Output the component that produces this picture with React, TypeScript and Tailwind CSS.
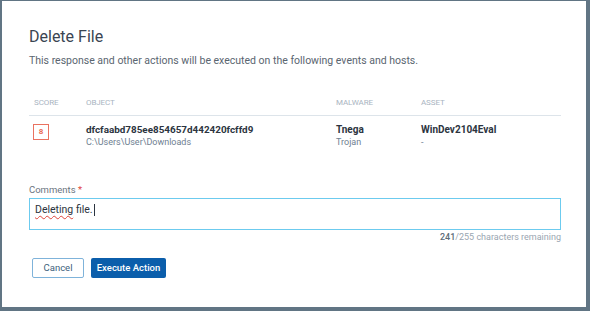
import React from "react";

export default function App() {
  return (
    <div
      className="w-[590px] h-[311px] bg-[#617584] pl-[2px] pt-[1px] pr-[4px] pb-[4px]"
      style={{ fontFamily: "Roboto, 'Noto Sans', sans-serif" }}
    >
      <div className="h-full w-full bg-white flex flex-col pl-[27px] pr-[25px]">
        <h1 className="mt-[26px] text-[16px] leading-[20px] text-[#3a4552] font-normal">
          Delete File
        </h1>
        <p className="mt-[7px] text-[10.5px] leading-[14px] text-[#5a6570]">
          This response and other actions will be executed on the following events and hosts.
        </p>

        <div className="mt-[30px] grid grid-cols-[57px_249px_85px_1fr] text-[8px] leading-[10px] text-[#a9b4bf] uppercase tracking-[-0.1px] border-b border-[#dde4ea] pb-[7px]">
          <div className="pl-[5px]">Score</div>
          <div>Object</div>
          <div className="pl-[1px]">Malware</div>
          <div className="pl-[1px]">Asset</div>
        </div>

        <div className="mt-[7px] grid grid-cols-[57px_249px_85px_1fr]">
          <div className="pl-[4px] pt-[1px]">
            <div className="w-[16px] h-[16px] border border-[#ea7260] flex items-center justify-center text-[8px] font-bold text-[#ea6a55]">
              8
            </div>
          </div>
          <div>
            <div className="text-[9.9px] leading-[13px] font-bold text-[#2c3440]">
              dfcfaabd785ee854657d442420fcffd9
            </div>
            <div className="text-[9px] leading-[12px] text-[#6e8091]">
              C:\Users\User\Downloads
            </div>
          </div>
          <div className="pl-[1px]">
            <div className="text-[10px] leading-[13px] font-bold text-[#2c3440]">Tnega</div>
            <div className="text-[9px] leading-[12px] text-[#6e8091]">Trojan</div>
          </div>
          <div className="pl-[1px]">
            <div className="text-[10px] leading-[13px] font-bold text-[#2c3440]">WinDev2104Eval</div>
            <div className="text-[9px] leading-[12px] text-[#6e8091]">-</div>
          </div>
        </div>

        <div className="mt-[36px] text-[9.5px] leading-[12px] text-[#6a7480]">
          Comments <span className="text-[#e0453a]">*</span>
        </div>
        <div className="mt-[2px] h-[32px] border-[1.5px] border-[#6ccbef] px-[5px] pt-[4px] text-[10.5px] leading-[14px] text-[#2c3440]">
          <span className="underline decoration-wavy decoration-[#e0453a] decoration-[1px] underline-offset-[2px]">Deleting</span>{" "}
          file.<span className="inline-block w-[1px] h-[12px] bg-[#2c3440] align-middle ml-[1px]"></span>
        </div>
        <div className="mt-[1px] text-right text-[9px] leading-[12px] text-[#9aa6b1]">
          <span className="text-[#5c6b78] font-medium">241</span>/255 characters remaining
        </div>

        <div className="mt-[15px] flex gap-[7px] pl-[3px]">
          <button className="w-[52px] h-[20px] border border-[#7fb3da] rounded-[2px] text-[9.5px] text-[#3e5f7d] bg-white">
            Cancel
          </button>
          <button className="w-[75px] h-[20px] rounded-[2px] bg-[#0b5eab] text-[9.5px] font-medium text-white">
            Execute Action
          </button>
        </div>
      </div>
    </div>
  );
}
